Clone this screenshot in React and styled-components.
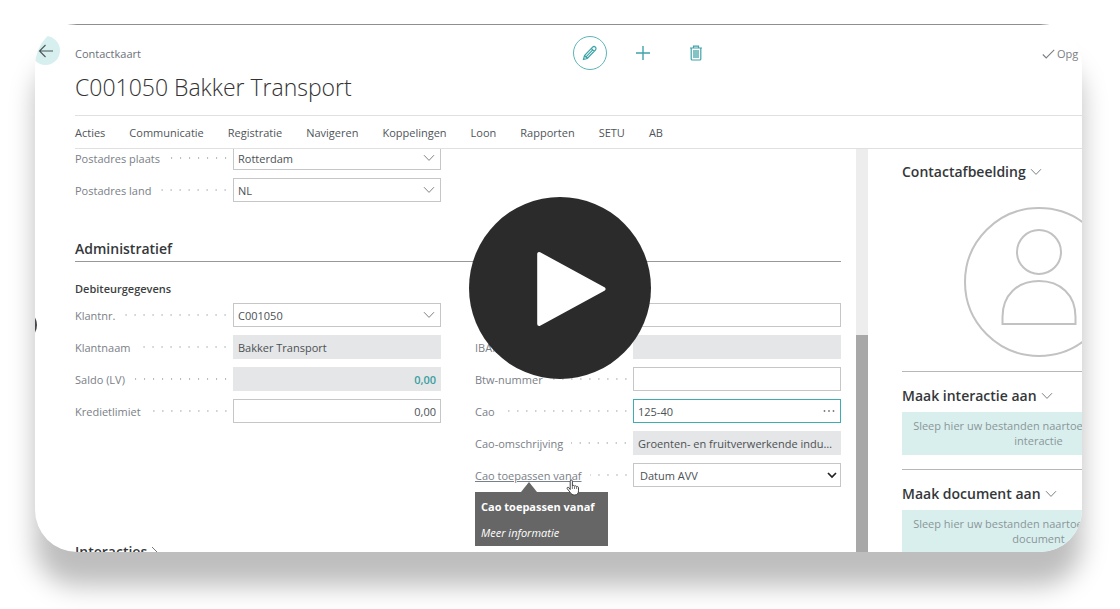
import React from "react";
import styled, { createGlobalStyle, css } from "styled-components";

// Record data
const actions = ["Acties", "Communicatie", "Registratie", "Navigeren", "Koppelingen", "Loon", "Rapporten", "SETU", "AB"];

const addressFields = [
  { id: "plaats", label: "Postadres plaats", value: "Rotterdam", icon: "chevron" },
  { id: "land", label: "Postadres land", value: "NL", icon: "chevron" },
];

const debtorFields = [
  { id: "klantnr", label: "Klantnr.", value: "C001050", icon: "chevron" },
  { id: "klantnaam", label: "Klantnaam", value: "Bakker Transport", locked: true },
  { id: "saldo", label: "Saldo (LV)", value: "0,00", locked: true, numeric: true, accent: true },
  { id: "krediet", label: "Kredietlimiet", value: "0,00", numeric: true },
];

const bankFields = [
  { id: "bank", label: "Bank", value: "" },
  { id: "iban", label: "IBAN", value: "", locked: true },
  { id: "btw", label: "Btw-nummer", value: "" },
  { id: "cao", label: "Cao", value: "125-40", icon: "dots", focused: true },
  { id: "omschrijving", label: "Cao-omschrijving", value: "Groenten- en fruitverwerkende industrie", locked: true },
];

const Chevron = () => (
  <svg width="12" height="8" viewBox="0 0 12 8" fill="none" stroke="#7d8083" aria-hidden="true">
    <path d="M1 1.2 6 6.4 11 1.2" />
  </svg>
);

const Field = ({ field }) => (
  <FieldRow>
    <FieldLabel htmlFor={field.id}>{field.label}</FieldLabel>
    <Dots />
    <InputWrap>
      <Input
        id={field.id}
        defaultValue={field.value}
        readOnly={field.locked}
        $locked={field.locked}
        $numeric={field.numeric}
        $accent={field.accent}
        $focused={field.focused}
      />
      {field.icon && (
        <InputIcon type="button" aria-label={`${field.label} kiezen`}>
          {field.icon === "chevron" ? (
            <Chevron />
          ) : (
            <svg width="12" height="4" viewBox="0 0 12 4" fill="currentColor" aria-hidden="true">
              <circle cx="1.5" cy="2" r="0.9" />
              <circle cx="6" cy="2" r="0.9" />
              <circle cx="10.5" cy="2" r="0.9" />
            </svg>
          )}
        </InputIcon>
      )}
    </InputWrap>
  </FieldRow>
);

const App = () => (
  <Page>
    <GlobalStyle />
    <Card>
      <TopEdge />
      <Header>
        <BackButton type="button" aria-label="Terug">
          <svg width="16" height="14" viewBox="0 0 16 14" fill="none" stroke="#4a5658" strokeWidth="1.1" aria-hidden="true">
            <path d="M15 7H1.5M7.5 1 1.5 7l6 6" />
          </svg>
        </BackButton>
        <Titles>
          <Caption>Contactkaart</Caption>
          <Title>C001050 Bakker Transport</Title>
        </Titles>
        <Tools>
          <ToolButton type="button" aria-label="Bewerken" $ringed>
            <svg width="16" height="16" viewBox="0 0 16 16" fill="none" stroke="currentColor" strokeWidth="1.2" aria-hidden="true">
              <path d="M1.500 14.500l1-4L10.600 2.200c.8-.8 2-.8 2.800 0s.8 2 0 2.800L5.300 13.500zM2.500 10.500l2.800 3M9.400 3.500l2.800 2.800M4.300 11.700 10.500 5.200" />
            </svg>
          </ToolButton>
          <ToolButton type="button" aria-label="Nieuw">
            <svg width="14" height="14" viewBox="0 0 14 14" fill="none" stroke="currentColor" strokeWidth="1.4" aria-hidden="true">
              <path d="M7 0v14M0 7h14" />
            </svg>
          </ToolButton>
          <ToolButton type="button" aria-label="Verwijderen">
            <svg width="14" height="16" viewBox="0 0 14 16" fill="none" stroke="currentColor" strokeWidth="1.2" aria-hidden="true">
              <path d="M1 3h12M4.500 2.500V1.200h5v1.300M2.200 3.500V14c0 .6.400 1 1 1h7.600c.6 0 1-.4 1-1V3.500" />
              <path d="M5 5v8M7 5v8M9 5v8" strokeWidth="1.3" />
            </svg>
          </ToolButton>
        </Tools>
        <Saved>
          <svg width="13" height="10" viewBox="0 0 13 10" fill="none" stroke="currentColor" strokeWidth="1.1" aria-hidden="true">
            <path d="M.8 5.500 4.200 9 12.200.8" />
          </svg>
          Opg
        </Saved>
      </Header>
      <ActionBar>
        {actions.map((action) => (
          <ActionButton key={action} type="button">
            {action}
          </ActionButton>
        ))}
      </ActionBar>
      <Body>
        <Main>
          <Columns>
            <Fields>
              {addressFields.map((field) => (
                <Field key={field.id} field={field} />
              ))}
            </Fields>
          </Columns>
          <SectionTitle $ruled>Administratief</SectionTitle>
          <GroupTitle>Debiteurgegevens</GroupTitle>
          <Columns>
            <Fields>
              {debtorFields.map((field) => (
                <Field key={field.id} field={field} />
              ))}
            </Fields>
            <Fields>
              {bankFields.map((field) => (
                <Field key={field.id} field={field} />
              ))}
              <FieldRow>
                <FieldLabel htmlFor="vanaf" $hovered>
                  Cao toepassen vanaf
                </FieldLabel>
                <Dots />
                <InputWrap>
                  <Select id="vanaf" defaultValue="avv">
                    <option value="avv">Datum AVV</option>
                  </Select>
                  <SelectArrow width="10" height="7" viewBox="0 0 10 7" aria-hidden="true">
                    <path d="M1 1l4 4 4-4" fill="none" stroke="#222" strokeWidth="1.700" />
                  </SelectArrow>
                </InputWrap>
                <Tooltip role="tooltip">
                  <strong>Cao toepassen vanaf</strong>
                  <em>Meer informatie</em>
                </Tooltip>
                <Pointer width="14" height="17" viewBox="0 0 14 17" aria-hidden="true">
                  <path
                    d="M4.200 10.500V2.200c0-1.600 2.200-1.600 2.200 0V7c.3-.9 1.900-.8 2.100.2.500-.7 1.900-.5 2.100.5.600-.5 1.900-.2 1.900 1v3.100c0 2.600-1.300 4.200-3.900 4.200-2.300 0-3.300-.8-4.500-2.700L1.200 9.700c-.6-1.200.8-2 1.700-1z"
                    fill="#fff"
                    stroke="#444"
                  />
                  <path d="M6.400 7v3M8.500 7.500V10M10.600 8v2" stroke="#444" strokeWidth=".7" />
                </Pointer>
              </FieldRow>
            </Fields>
          </Columns>
          <SectionTitle>
            Interacties
            <svg width="8" height="12" viewBox="0 0 8 12" fill="none" stroke="#777" aria-hidden="true">
              <path d="M1 1l5 5-5 5" />
            </svg>
          </SectionTitle>
        </Main>
        <Scrollbar>
          <Thumb />
        </Scrollbar>
        <FactBox>
          <FactSection>
            <FactTitle>
              Contactafbeelding <Chevron />
            </FactTitle>
            <Avatar viewBox="0 0 150 150" aria-hidden="true">
              <circle cx="75" cy="75" r="74" />
              <circle cx="75" cy="45" r="22" />
              <path d="M38.500 117v-7c0-22 15-36 36.500-36s36.500 14 36.500 36v7z" />
            </Avatar>
          </FactSection>
          <FactSection>
            <FactTitle>
              Maak interactie aan <Chevron />
            </FactTitle>
            <DropZone>Sleep hier uw bestanden naartoe of klik voor een interactie</DropZone>
          </FactSection>
          <FactSection>
            <FactTitle>
              Maak document aan <Chevron />
            </FactTitle>
            <DropZone>Sleep hier uw bestanden naartoe of klik voor een document</DropZone>
          </FactSection>
        </FactBox>
      </Body>
      <PreviousRecord type="button" aria-label="Vorige" />
    </Card>
    <PlayLayer>
      <PlayButton type="button" aria-label="Video afspelen">
        <svg width="70" height="76" viewBox="0 0 70 76" aria-hidden="true">
          <path d="M3.200 4v70L67.500 39z" fill="#fff" stroke="#fff" strokeWidth="4" strokeLinejoin="round" />
        </svg>
      </PlayButton>
    </PlayLayer>
  </Page>
);

// Styled Components
const GlobalStyle = createGlobalStyle`
  * {
    box-sizing: border-box;
  }

  body {
    margin: 0;
    background: #fff;
  }

  body, button, input, select {
    font-family: "Open Sans", "Noto Sans", sans-serif;
    font-size: 11px;
  }

  button {
    padding: 0;
    border: 0;
    background: none;
    color: inherit;
    cursor: pointer;
  }
`;

const Page = styled.div`
  position: relative;
  display: flex;
  height: 100vh;
  padding: 24px 38px 57px 35px;
  overflow: hidden;
`;

const Card = styled.div`
  position: relative;
  flex: 1;
  min-width: 0;
  display: flex;
  flex-direction: column;
  overflow: hidden;
  border-radius: 42px;
  background: #fff;
  box-shadow: 0 34px 26px #bebebe;
`;

const TopEdge = styled.div`
  flex: none;
  height: 1px;
  background: #8f8f8f;
`;

const Header = styled.header`
  position: relative;
  flex: none;
  height: 90px;
  padding-left: 40px;
`;

const BackButton = styled.button`
  position: absolute;
  left: -4px;
  top: 11px;
  display: grid;
  place-items: center;
  width: 29px;
  height: 29px;
  border-radius: 50%;
  background: #d8efef;
`;

const Titles = styled.div`
  padding-top: 20px;
`;

const Caption = styled.div`
  line-height: 18px;
  color: #6b7278;
`;

const Title = styled.h1`
  margin: 6px 0 0;
  font-size: 23px;
  font-weight: 300;
  line-height: 36px;
  color: #333;
`;

const Tools = styled.div`
  position: absolute;
  inset: 11px 0 auto;
  display: flex;
  justify-content: center;
  gap: 19px;
  padding-left: 168px;
`;

const ToolButton = styled.button`
  display: grid;
  place-items: center;
  width: 34px;
  height: 34px;
  border: 1px solid ${({ $ringed }) => ($ringed ? "#5cb5b9" : "transparent")};
  border-radius: 50%;
  color: #3fa3a8;
`;

const Saved = styled.div`
  position: absolute;
  left: calc(100% - 40px);
  top: 20px;
  display: flex;
  align-items: center;
  gap: 2px;
  line-height: 18px;
  color: #7b8085;
`;

const ActionBar = styled.nav`
  flex: none;
  display: flex;
  gap: 24px;
  height: 34px;
  margin-left: 40px;
  border: solid #e0e0e0;
  border-width: 1px 0;
`;

const ActionButton = styled.button`
  color: #505559;
`;

const Body = styled.div`
  flex: 1;
  min-height: 0;
  display: flex;
  overflow: hidden;
`;

const Main = styled.main`
  flex: 1;
  min-width: 0;
  margin-top: -3px;
  padding: 0 15px 0 40px;
`;

const Columns = styled.div`
  display: grid;
  grid-template-columns: 1fr 1fr;
  align-items: start;
  gap: 34px;
`;

const Fields = styled.div`
  display: grid;
  gap: 8px;
`;

const FieldRow = styled.div`
  position: relative;
  display: flex;
  align-items: center;
  height: 24px;
`;

const FieldLabel = styled.label`
  color: #7a8087;
  white-space: nowrap;
  text-decoration: ${({ $hovered }) => ($hovered ? "underline" : "none")};
`;

const Dots = styled.span`
  flex: 1;
  height: 2px;
  margin: 0 3px 0 8px;
  background: radial-gradient(circle, #b4b8bc 1px, transparent 1px) right center / 9px 2px repeat-x;
`;

const InputWrap = styled.div`
  position: relative;
  flex: 0 0 208px;
  height: 24px;
`;

const fieldBox = css`
  width: 100%;
  height: 24px;
  padding: 0 4px;
  border: 1px solid #c4c6c8;
  border-radius: 0;
  background: #fff;
  color: #4c5154;
  outline: none;
`;

const Input = styled.input`
  ${fieldBox}
  text-overflow: ellipsis;
  ${({ $locked }) => $locked && "background: #e5e6e7; border-color: #e5e6e7;"}
  ${({ $numeric }) => $numeric && "text-align: right;"}
  ${({ $accent }) => $accent && "color: #3a9ea3; font-weight: 600;"}
  ${({ $focused }) => $focused && "border-color: #3fadb0;"}
`;

const InputIcon = styled.button`
  position: absolute;
  right: 6px;
  top: 0;
  display: grid;
  place-items: center;
  height: 24px;
  color: #777;
`;

const Select = styled.select`
  ${fieldBox}
  appearance: none;
  padding-left: 6px;
`;

const SelectArrow = styled.svg`
  position: absolute;
  right: 4px;
  top: 9px;
  pointer-events: none;
`;

const Tooltip = styled.div`
  position: absolute;
  left: 0;
  top: 29px;
  display: grid;
  align-content: start;
  gap: 10px;
  width: 133px;
  height: 54px;
  padding: 7px 6px 0;
  background: #666;
  color: #fff;
  line-height: 16px;
  white-space: nowrap;

  &::before {
    content: "";
    position: absolute;
    left: 46px;
    bottom: 100%;
    border: solid transparent;
    border-width: 0 8px 10px;
    border-bottom-color: #666;
  }
`;

const Pointer = styled.svg`
  position: absolute;
  left: 91px;
  top: 16px;
`;

const SectionTitle = styled.h2`
  display: flex;
  align-items: center;
  gap: 4px;
  height: 27px;
  margin: ${({ $ruled }) => ($ruled ? "33px 0 0" : "51px 0 0")};
  border-bottom: ${({ $ruled }) => ($ruled ? "1px solid #96989c" : "0")};
  font-size: 14px;
  font-weight: 600;
  color: #34373a;
`;

const GroupTitle = styled.h3`
  margin: 18px 0 5px;
  font-size: 11px;
  font-weight: 600;
  line-height: 18px;
  color: #3c3f42;
`;

const Scrollbar = styled.div`
  flex: 0 0 12px;
  padding-top: 186px;
  display: flex;
  background: #ededed;
`;

const Thumb = styled.div`
  flex: 1;
  background: #a8a8a8;
`;

const FactBox = styled.aside`
  flex: 0 0 214px;
  padding: 11px 0 0 34px;
  overflow: hidden;
`;

const FactSection = styled.section`
  width: 273px;
  margin-bottom: 14px;

  & + & {
    padding-top: 12px;
    border-top: 1px solid #b5b7b9;
  }
`;

const FactTitle = styled.h2`
  display: flex;
  align-items: center;
  gap: 4px;
  margin: 0;
  font-size: 14px;
  font-weight: 600;
  line-height: 24px;
  color: #34373a;
`;

const Avatar = styled.svg`
  display: block;
  width: 150px;
  height: 150px;
  margin: 23px auto 0;
  fill: none;
  stroke: #c2c2c2;
  stroke-width: 2;
`;

const DropZone = styled.div`
  height: 43px;
  margin-top: 4px;
  padding: 6px;
  background: #d9efee;
  color: #8a9698;
  line-height: 15px;
  text-align: center;
`;

const PreviousRecord = styled.button`
  position: absolute;
  left: -28px;
  top: 286px;
  width: 30px;
  height: 30px;
  border-radius: 50%;
  background: #43484c;
`;

const PlayLayer = styled.div`
  position: absolute;
  inset: 24px 0 57px;
  display: grid;
  place-items: center;
  pointer-events: none;
`;

const PlayButton = styled.button`
  display: grid;
  place-items: center;
  width: 182px;
  height: 182px;
  padding-left: 22px;
  border-radius: 50%;
  background: #2b2b2b;
  pointer-events: auto;
`;

export default App;
